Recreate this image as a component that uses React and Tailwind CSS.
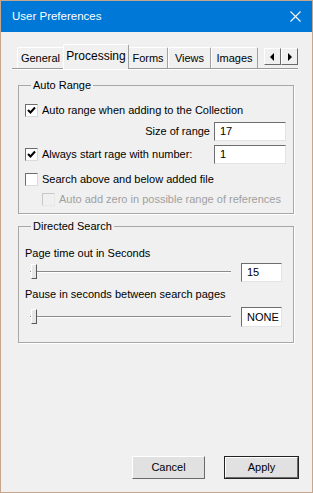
import React from 'react'

const font = { fontFamily: '"Liberation Sans", Arial, sans-serif' }

function CheckBox({ checked, disabled }) {
  return (
    <div
      className={`w-[13px] h-[13px] shrink-0 border flex items-center justify-center ${
        disabled
          ? 'border-t-[#c8c8c8] border-l-[#c8c8c8] border-r-[#e8e8e8] border-b-[#e8e8e8] bg-[#f0f0f0]'
          : 'border-t-[#6d6d6d] border-l-[#6d6d6d] border-r-[#dadada] border-b-[#dadada] bg-white'
      }`}
    >
      {checked && (
        <svg width="9" height="9" viewBox="0 0 9 9">
          <path d="M1 4 L3.5 6.5 L8 1.5" fill="none" stroke="#000" strokeWidth="2" />
        </svg>
      )}
    </div>
  )
}

function TextBox({ value, w, h = 'h-[19px]' }) {
  return (
    <div className={`${w} ${h} shrink-0 bg-white border border-t-[#6d6d6d] border-l-[#6d6d6d] border-r-[#e3e3e3] border-b-[#e3e3e3] flex items-center px-[5px] text-[11px]`}>
      {value}
    </div>
  )
}

function Slider() {
  return (
    <div className="relative w-[201px] h-[16px] flex items-center shrink-0">
      <div className="w-full h-[2px] border-t border-t-[#8c8c8c] border-b border-b-white" />
      <div className="absolute left-[1px] top-0 w-[6px] h-[15px] bg-[#e8e8e8] border border-t-white border-l-white border-r-[#5a5a5a] border-b-[#5a5a5a]" />
    </div>
  )
}

function Tab({ label, w, selected }) {
  return (
    <div
      className={`${w} flex items-center justify-center text-[11px] border-t border-l border-r border-t-white border-l-white border-r-[#a0a0a0] rounded-t-[2px] ${
        selected ? 'h-[25px] -mb-[1px] bg-[#f0f0f0] -mx-[1px] z-10 pb-[3px] text-[12px]' : 'h-[21px] bg-[#f0f0f0]'
      }`}
    >
      {label}
    </div>
  )
}

function ArrowBtn({ dir }) {
  return (
    <div className="w-[17px] h-[17px] bg-[#f0f0f0] border border-t-white border-l-white border-r-[#696969] border-b-[#696969] flex items-center justify-center">
      <svg width="5" height="8" viewBox="0 0 5 8">
        {dir === 'left' ? <polygon points="4,0 4,8 0,4" fill="#000" /> : <polygon points="1,0 1,8 5,4" fill="#000" />}
      </svg>
    </div>
  )
}

function Button({ label, w, primary }) {
  return (
    <div className={`${w} h-[23px] ${primary ? 'border border-[#222]' : ''}`}>
      <div className="w-full h-full bg-[#e1e1e1] border border-t-white border-l-white border-r-[#6a6a6a] border-b-[#6a6a6a] flex items-center justify-center text-[11px]">
        {label}
      </div>
    </div>
  )
}

export default function App() {
  return (
    <div style={font} className="w-[313px] h-[493px] flex flex-col bg-[#f0f0f0] border border-[#c6a68c] text-black overflow-hidden">
      <div className="h-[31px] bg-[#0078d7] flex items-center justify-between pl-[11px] pr-[11px] text-white text-[11.5px]">
        <span>User Preferences</span>
        <svg width="11" height="11" viewBox="0 0 11 11">
          <path d="M0.5 0.5 L10.5 10.5 M10.5 0.5 L0.5 10.5" stroke="#fff" strokeWidth="1.1" />
        </svg>
      </div>

      <div className="mt-[12px] ml-[11px] mr-[14px]">
        <div className="flex items-end h-[24px] pl-[5px]">
          <Tab label="General" w="w-[47px]" />
          <Tab label="Processing" w="w-[66px]" selected />
          <Tab label="Forms" w="w-[40px]" />
          <Tab label="Views" w="w-[43px]" />
          <Tab label="Images" w="w-[47px]" />
          <div className="ml-auto flex mb-[3px]">
            <ArrowBtn dir="left" />
            <ArrowBtn dir="right" />
          </div>
        </div>
        <div className="h-[2px] border-t border-t-[#9a9a9a] border-b border-b-white" />
      </div>

      <div className="ml-[17px] mr-[18px] mt-[9px] text-[11px]">
        <fieldset className="border border-[#a8a8a8] shadow-[1px_1px_0_#ffffff] pl-[6px] pr-[7px] pb-[6px]">
          <legend className="ml-[6px] px-[2px] leading-[13px]">Auto Range</legend>
          <div className="flex items-center gap-[4px] h-[16px] mt-[10px]">
            <CheckBox checked />
            <span>Auto range when adding to the Collection</span>
          </div>
          <div className="flex items-center justify-end gap-[4px] h-[20px] mt-[3px]">
            <span>Size of range</span>
            <TextBox value="17" w="w-[72px]" />
          </div>
          <div className="flex items-center gap-[4px] h-[20px] mt-[3px]">
            <CheckBox checked />
            <span>Always start rage with number:</span>
            <div className="ml-auto">
              <TextBox value="1" w="w-[72px]" />
            </div>
          </div>
          <div className="flex items-center gap-[4px] h-[16px] mt-[7px]">
            <CheckBox />
            <span>Search above and below added file</span>
          </div>
          <div className="flex items-center gap-[4px] h-[16px] mt-[4px] pl-[17px] text-[#a0a0a0]">
            <CheckBox disabled />
            <span>Auto add zero in possible range of references</span>
          </div>
        </fieldset>

        <fieldset className="mt-[6px] border border-[#a8a8a8] shadow-[1px_1px_0_#ffffff] pl-[6px] pr-[11px] pb-[15px]">
          <legend className="ml-[6px] px-[2px] leading-[13px]">Directed Search</legend>
          <div className="h-[14px] flex items-center mt-[13px]">Page time out in Seconds</div>
          <div className="flex items-center h-[20px] mt-[2px]">
            <div className="ml-[5px]">
              <Slider />
            </div>
            <div className="ml-auto">
              <TextBox value="15" w="w-[41px]" />
            </div>
          </div>
          <div className="h-[14px] flex items-center mt-[5px]">Pause in seconds between search pages</div>
          <div className="flex items-center h-[20px] mt-[6px]">
            <div className="ml-[5px]">
              <Slider />
            </div>
            <div className="ml-auto">
              <TextBox value="NONE" w="w-[41px]" h="h-[20px]" />
            </div>
          </div>
        </fieldset>
      </div>

      <div className="mt-auto mb-[13px] pr-[13px] flex justify-end gap-[19px]">
        <Button label="Cancel" w="w-[73px]" />
        <Button label="Apply" w="w-[75px]" primary />
      </div>
    </div>
  )
}
